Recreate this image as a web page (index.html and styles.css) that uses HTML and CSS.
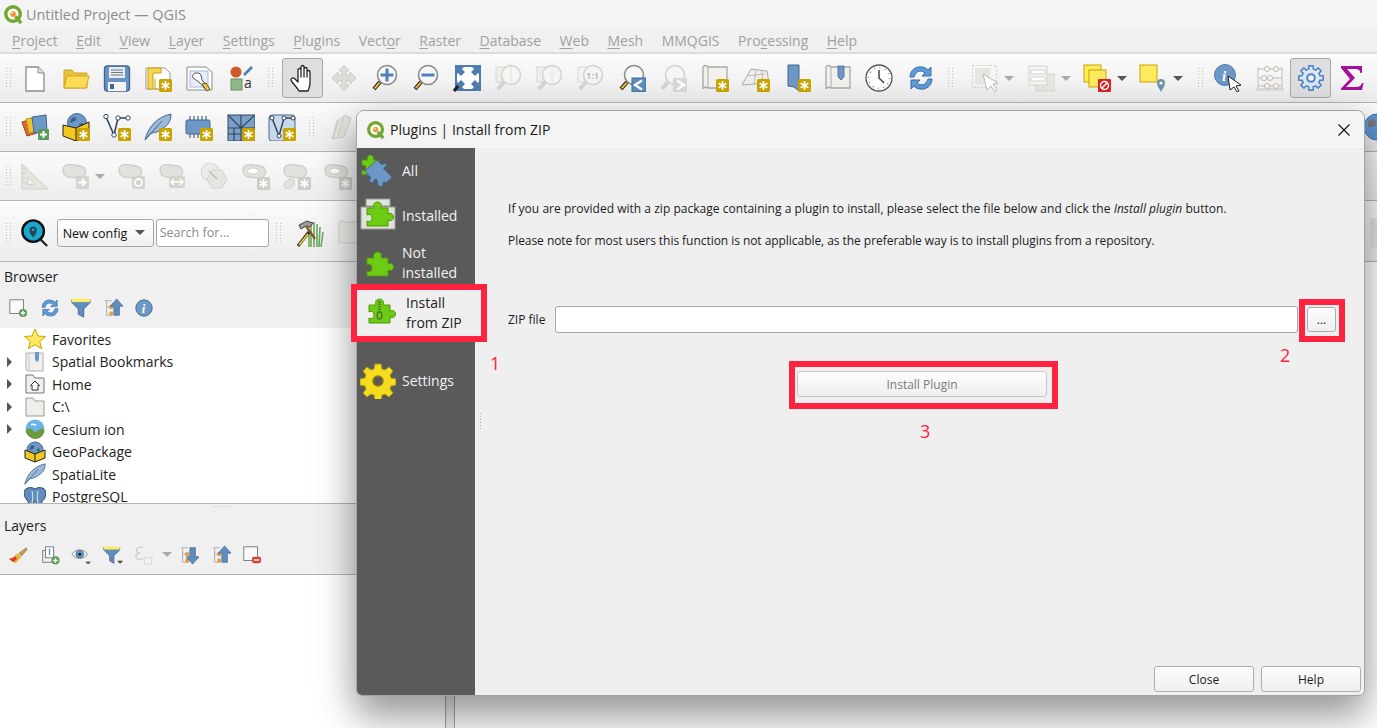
FILE: index.html
```html
<!DOCTYPE html>
<html lang="en">
<head>
  <meta charset="UTF-8">
  <title>Untitled Project — QGIS</title>
  <link rel="stylesheet" href="styles.css">
</head>
<body>

<svg class="sprite" xmlns="http://www.w3.org/2000/svg">
  <defs>
    <g id="star"><rect width="13" height="13" rx="1.5" fill="#c9a400"/><path d="M6.5 2v9M2.6 4.2l7.8 4.6M2.6 8.8l7.8-4.6" stroke="#fff" stroke-width="1.7"/></g>
    <g id="star-off"><rect width="13" height="13" rx="1.5" fill="#cfcdc6"/><path d="M6.5 2v9M2.6 4.2l7.8 4.6M2.6 8.8l7.8-4.6" stroke="#fff" stroke-width="1.7"/></g>
    <g id="lens"><path d="M9 18l-6 7" stroke="#222" stroke-width="4"/><path d="M8.6 18.6l-5 5.8" stroke="#f2c230" stroke-width="2"/><circle cx="16" cy="11" r="9.5" fill="#f7f7f7" stroke="#8b8b8b" stroke-width="1.6"/></g>
    <g id="lens-off"><path d="M9 18l-6 7" stroke="#d5d3cd" stroke-width="4"/><circle cx="16" cy="11" r="9.5" fill="#f5f5f3" stroke="#d2d2d2" stroke-width="1.6"/></g>
    <path id="blob" d="M1 8c0-5 5-6 10-5s10 0 12 4-1 9-6 9-7-1-10-1-6-2-6-7z" fill="#e2e1dd" stroke="#cfcecb" stroke-width="1.3"/>
    <path id="piece" d="M5 10h7c-1.5-4 1-6 3.5-6s5 2 3.5 6h7v6c3-1.5 5.5 0 5.5 3s-2.5 4.5-5.5 3v6H5v-5c3 1.5 5 0 5-3s-2-4.5-5-3z" fill="#6ccb12" stroke="#4f9a0a" stroke-width="1"/>
  </defs>

  <symbol id="qgis" viewBox="0 0 22 22"><circle cx="10.5" cy="10.5" r="7.6" fill="#fff" stroke="#72a82f" stroke-width="3.6"/><path d="M13 13l6 7" stroke="#72a82f" stroke-width="3.6"/><circle cx="10.5" cy="10.5" r="3" fill="#f0913a"/><circle cx="9.5" cy="9.5" r="1.2" fill="#ffe9a8"/></symbol>

  <symbol id="new" viewBox="0 0 28 28"><path d="M5 3h12l6 6v18H5z" fill="#fff" stroke="#8a8a8a" stroke-width="1.3"/><path d="M17 3v6h6" fill="#e4e4e4" stroke="#8a8a8a"/></symbol>
  <symbol id="open" viewBox="0 0 28 28"><path d="M2 24V6h8l2 3h13v15z" fill="#e8c23c" stroke="#cda828"/><path d="M2 24l3-12h22l-3 12z" fill="#ffdc55" stroke="#cda828"/></symbol>
  <symbol id="save" viewBox="0 0 28 28"><rect x="1.5" y="2" width="25" height="25" rx="3" fill="#6a93c4" stroke="#41678f" stroke-width="1.4"/><rect x="6" y="3" width="16" height="11" fill="#e9edf1"/><path d="M8 6h12M8 8.5h12M8 11h12" stroke="#6d7a88"/><rect x="5" y="18" width="18" height="9" fill="#f4f4f4"/><rect x="7" y="20" width="4" height="5" fill="#41678f"/></symbol>
  <symbol id="layout" viewBox="0 0 28 28"><path d="M2 4h19l5 5v16H2z" fill="#fff" stroke="#9a9a9a"/><path d="M4 4h13v5h-8v16H4z" fill="#f5d55a" stroke="#c9a400"/><path d="M11 15v10h3" fill="none" stroke="#c9a400"/><use href="#star" x="15" y="15"/></symbol>
  <symbol id="manager" viewBox="0 0 28 28"><path d="M2 3h19l6 5v18H2z" fill="#fff" stroke="#8a8a8a"/><rect x="5" y="7" width="18" height="16" fill="#e8eefc" stroke="#a8b8dd"/><path d="M11 9c-3 0-4 3-3 5l6 4 8 9 3-2-8-9-1-5c-1-2-3-2-5-2z" fill="#fff" stroke="#555"/><path d="M17 20l5 7 3-2-4-6z" fill="#f0c850" stroke="#6a5a20"/></symbol>
  <symbol id="style" viewBox="0 0 28 28"><circle cx="9" cy="8" r="5.5" fill="#d05a2a"/><path d="M17 11l8-8" stroke="#4f80b4" stroke-width="2.6"/><rect x="4" y="15" width="11" height="11" fill="#8fb98a" stroke="#6b8f68"/></symbol>
  <symbol id="hand" viewBox="0 0 28 28"><path d="M10 27c-2-4-7-8-8-11 0-2 2-3 4-1l3 3V6c0-2 3-2 3 0v7V3c0-2 3-2 3 0v10V5c0-2 3-2 3 0v8V8c0-2 3-2 3 0v11c0 3-1 5-2 8z" fill="#fff" stroke="#222" stroke-width="1.3" stroke-linejoin="round"/></symbol>
  <symbol id="pan" viewBox="0 0 28 28"><path d="M14 1l5 6h-3v4h4V8l6 6-6 6v-3h-4v4h3l-5 6-5-6h3v-4H8v3l-6-6 6-6v3h4V7H9z" fill="#dcdcd8" stroke="#cbcbc7"/></symbol>
  <symbol id="zoomin" viewBox="0 0 28 28"><use href="#lens"/><path d="M9.5 11h13M16 4.5v13" stroke="#4f80b8" stroke-width="3"/></symbol>
  <symbol id="zoomout" viewBox="0 0 28 28"><use href="#lens"/><path d="M9.5 11h13" stroke="#4f80b8" stroke-width="3"/></symbol>
  <symbol id="full" viewBox="0 0 28 28"><rect x="3" y="2" width="24" height="24" fill="#fff" stroke="#4f7cae" stroke-width="2"/><path d="M3 2h9l-3 3 3 3-4 4-3-3-2 3zM27 2h-9l3 3-3 3 4 4 3-3 2 3zM27 26h-9l3-3-3-3 4-4 3 3 2-3zM3 26h9l-3-3 3-3-4-4-3 3-2-3z" fill="#4f7cae"/><path d="M1 27l4-5" stroke="#222" stroke-width="3"/></symbol>
  <symbol id="zlayer" viewBox="0 0 28 28"><rect x="1" y="3" width="14" height="15" fill="#efeee9" stroke="#d8d7d2"/><use href="#lens-off"/><path d="M16 2v18" stroke="#e2e2e0"/></symbol>
  <symbol id="z11" viewBox="0 0 28 28"><rect x="1" y="3" width="14" height="15" fill="#f3f3f1" stroke="#d8d7d2"/><use href="#lens-off"/></symbol>
  <symbol id="zlast" viewBox="0 0 28 28"><use href="#lens"/><rect x="14" y="14" width="14" height="14" fill="#5f8dbf" stroke="#41678f"/><path d="M24 16.5l-7 4.5 7 4.5" fill="none" stroke="#fff" stroke-width="2.4"/></symbol>
  <symbol id="znext" viewBox="0 0 28 28"><use href="#lens-off"/><rect x="14" y="14" width="14" height="14" fill="#d7d7d5"/><path d="M18 16.5l7 4.5-7 4.5" fill="none" stroke="#fff" stroke-width="2.4"/></symbol>
  <symbol id="map" viewBox="0 0 28 28"><path d="M2 3c1-2 4-2 5 0h19v21H7c-2-1-4-1-5 1z" fill="#f1f0ec" stroke="#a9a9a5" stroke-width="1.3"/><path d="M7 3v21" stroke="#a9a9a5"/><use href="#star" x="15" y="15"/></symbol>
  <symbol id="map3d" viewBox="0 0 28 28"><path d="M9 5l16 2 2 12-27 2z" fill="#efeeea" stroke="#a9a9a5"/><path d="M5 12l18-2M14 6l-2 14M20 7l1 12" stroke="#bcbcb8"/><use href="#star" x="15" y="15"/></symbol>
  <symbol id="newbm" viewBox="0 0 28 28"><path d="M5 1h11v26l-5-4-6-1z" fill="#6d98c6" stroke="#41678f"/><use href="#star" x="15" y="15"/></symbol>
  <symbol id="showbm" viewBox="0 0 28 28"><path d="M2 3c1-2 4-2 5 0h19v21H7c-2-1-4-1-5 1z" fill="#f1f0ec" stroke="#a9a9a5" stroke-width="1.3"/><path d="M7 3v21" stroke="#a9a9a5"/><path d="M14 2h6v11l-3 3-3-3z" fill="#6d98c6" stroke="#41678f" stroke-width=".8"/></symbol>
  <symbol id="clock" viewBox="0 0 28 28"><circle cx="14" cy="14" r="13" fill="#fff" stroke="#565656" stroke-width="1.3"/><circle cx="14" cy="14" r="10.5" fill="none" stroke="#6d98c6" stroke-width="1.6" stroke-dasharray="1 4.5"/><path d="M14 6v8l5 5" fill="none" stroke="#444" stroke-width="1.5"/></symbol>
  <symbol id="refresh" viewBox="0 0 28 28"><path d="M3 13C3 6 9 2 15 3c3 0 5 2 6 3l3-3v9h-9l3-3c-3-3-9-3-11 4z" fill="#5f9bd8" stroke="#3a6ea6"/><path d="M25 15c0 7-6 11-12 10-3 0-5-2-6-3l-3 3v-9h9l-3 3c3 3 9 3 11-4z" fill="#5f9bd8" stroke="#3a6ea6"/></symbol>
  <symbol id="select" viewBox="0 0 28 28"><rect x="1.5" y="1.5" width="24" height="22" fill="none" stroke="#d2d1cc" stroke-dasharray="2 1.5"/><rect x="4" y="4" width="15" height="16" fill="#e6e5df"/><path d="M12 10l15 9-5 1 4 6-2 2-4-6-4 4z" fill="#fff" stroke="#bcbcb8"/></symbol>
  <symbol id="forms" viewBox="0 0 28 28"><rect x="9" y="10" width="19" height="17" fill="#e6e5df" stroke="#d6d5cf"/><rect x="2" y="2" width="18" height="19" fill="#f5f5f3" stroke="#d2d1cc"/><path d="M4 6h14v4H4zM4 13h14v4H4z" fill="#fff" stroke="#d2d1cc"/></symbol>
  <symbol id="desel" viewBox="0 0 28 28"><rect x="1" y="1" width="17" height="17" fill="#ffe95c" stroke="#c9a400"/><rect x="6" y="6" width="17" height="17" fill="#ffe95c" stroke="#c9a400"/><rect x="15" y="15" width="13" height="13" rx="1" fill="#d8232a"/><circle cx="21.5" cy="21.5" r="4" fill="none" stroke="#fff" stroke-width="1.5"/><path d="M18.5 24.5l6-6" stroke="#fff" stroke-width="1.5"/></symbol>
  <symbol id="selloc" viewBox="0 0 28 28"><rect x="1" y="1" width="17" height="17" fill="#ffe95c" stroke="#c9a400"/><path d="M22 28c-2-4-4-6-4-9a4 4 0 0 1 8 0c0 3-2 5-4 9z" fill="#6f94ae"/><circle cx="22" cy="19" r="1.6" fill="#fff"/></symbol>
  <symbol id="info" viewBox="0 0 28 28"><circle cx="11" cy="11" r="10.5" fill="#6d98c6" stroke="#4f7cae"/></symbol>
  <symbol id="cursor" viewBox="0 0 28 28"><path d="M14 12l13 9-5 1 3 5-2 1-3-5-4 3z" fill="#fff" stroke="#222"/></symbol>
  <symbol id="abacus" viewBox="0 0 28 28"><path d="M2 3v22M26 3v22M2 5h24M2 14h24M2 22h24" stroke="#cfcdc7" stroke-width="1.3"/><rect y="24" width="28" height="3" fill="#dcdbd6"/><circle cx="11" cy="5" r="2.6" fill="#f4f4f2" stroke="#c5bdb5"/><circle cx="20" cy="5" r="2.6" fill="#f4f4f2" stroke="#c5bdb5"/><circle cx="8" cy="14" r="2.6" fill="#f4f4f2" stroke="#c5bdb5"/><circle cx="14" cy="14" r="2.6" fill="#f4f4f2" stroke="#c5bdb5"/><circle cx="11" cy="22" r="2.6" fill="#f4f4f2" stroke="#c5bdb5"/><circle cx="20" cy="22" r="2.6" fill="#f4f4f2" stroke="#c5bdb5"/></symbol>
  <symbol id="gear" viewBox="0 0 28 28">
    <g fill="#4f86c6"><rect x="11" y="1" width="6" height="26" rx="1"/><rect x="11" y="1" width="6" height="26" rx="1" transform="rotate(45 14 14)"/><rect x="11" y="1" width="6" height="26" rx="1" transform="rotate(90 14 14)"/><rect x="11" y="1" width="6" height="26" rx="1" transform="rotate(135 14 14)"/><circle cx="14" cy="14" r="10"/></g>
    <g fill="#dbe6f3"><rect x="12.5" y="2.6" width="3" height="22.8"/><rect x="12.5" y="2.6" width="3" height="22.8" transform="rotate(45 14 14)"/><rect x="12.5" y="2.6" width="3" height="22.8" transform="rotate(90 14 14)"/><rect x="12.5" y="2.6" width="3" height="22.8" transform="rotate(135 14 14)"/><circle cx="14" cy="14" r="8.4"/></g>
    <circle cx="14" cy="14" r="3.8" fill="#f5f5f5" stroke="#4f86c6" stroke-width="2"/>
  </symbol>
  <symbol id="sigma" viewBox="0 0 28 28"><path d="M3 2h21v7h-1.5c-.5-3-2-4-5-4H9l8 9-9 9h10c3 0 5-1 6-4h1.5L24 26H3v-1.5L12 15 3 4z" fill="#a4109c"/></symbol>

  <symbol id="addlayer" viewBox="0 0 28 28"><path d="M1 9l10-3 5 14-10 3z" fill="#d96a2c" stroke="#a0481a"/><path d="M5 6l11-2 3 14-11 2z" fill="#f2c230" stroke="#b9921a"/><path d="M11 4l14-2 1 16-13 2z" fill="#6d98c6" stroke="#41678f"/><rect x="17" y="16" width="11" height="11" rx="1" fill="#5c9a5c"/><path d="M22.5 18v7M19 21.5h7" stroke="#fff" stroke-width="2"/></symbol>
  <symbol id="gpkg" viewBox="0 0 28 28"><circle cx="15" cy="10" r="9.5" fill="#6d98c6" stroke="#41678f"/><path d="M10 5c3-2 5 0 4 2s-4 1-5 3-1-3 1-5zM17 11c2-2 5-1 5 1s-3 3-4 2z" fill="#3d5f85"/><path d="M1 12l13 3 13-6v13l-13 6-13-5z" fill="#f0c820" stroke="#222"/><path d="M14 15v13" stroke="#222"/><use href="#star" x="15" y="15"/></symbol>
  <symbol id="vector" viewBox="0 0 28 28"><path d="M3 4l8 18 4-17h10" fill="none" stroke="#33475e" stroke-width="1.6"/><circle cx="3" cy="3.5" r="2.2" fill="#fff" stroke="#33475e"/><circle cx="11" cy="22" r="2.2" fill="#fff" stroke="#33475e"/><circle cx="15" cy="5" r="2.2" fill="#fff" stroke="#33475e"/><circle cx="25" cy="5" r="2.2" fill="#fff" stroke="#33475e"/><use href="#star" x="15" y="15"/></symbol>
  <symbol id="feather" viewBox="0 0 28 28"><path d="M1 27C4 14 13 4 27 1c0 8-4 12-8 14-3 3-7 5-12 5z" fill="#9cb8d8" stroke="#41678f"/><path d="M1 27L18 8" stroke="#41678f"/></symbol>
  <symbol id="featherstar" viewBox="0 0 28 28"><use href="#feather"/><use href="#star" x="15" y="15"/></symbol>
  <symbol id="chip" viewBox="0 0 28 28"><path d="M5 3v22M9 3v22M13 3v22M17 3v22M21 3v22" stroke="#33475e"/><rect x="1" y="7" width="24" height="14" rx="1.5" fill="#6d98c6" stroke="#41678f"/><use href="#star" x="15" y="15"/></symbol>
  <symbol id="mesh" viewBox="0 0 28 28"><rect x="1" y="2" width="27" height="26" fill="#7ba0c8" stroke="#33475e"/><path d="M1 15h27M14 2v26M1 2l13 13M14 15L28 2M1 21h13M7 15v13" stroke="#33475e" stroke-width="1.2"/><use href="#star" x="15" y="15"/></symbol>
  <symbol id="virtual" viewBox="0 0 28 28"><rect x="1" y="2" width="26" height="26" rx="3" fill="#c9d9ea" stroke="#41678f"/><path d="M4 5l7 18 5-18h9" fill="none" stroke="#33475e" stroke-width="1.5"/><circle cx="4" cy="5" r="2" fill="#fff" stroke="#33475e"/><circle cx="11" cy="23" r="2" fill="#fff" stroke="#33475e"/><circle cx="16" cy="5" r="2" fill="#fff" stroke="#33475e"/><circle cx="25" cy="5" r="2" fill="#fff" stroke="#33475e"/><use href="#star" x="15" y="15"/></symbol>
  <symbol id="pencils" viewBox="0 0 28 28"><path d="M2 26l5-18 8-6 6 3-7 19z" fill="#e6e5e0" stroke="#d0cfca"/><path d="M8 8l-5 18M14 4l-6 20" stroke="#d0cfca"/></symbol>
  <symbol id="globe" viewBox="0 0 28 28"><circle cx="14" cy="14" r="13" fill="#5e93cf" stroke="#3f6f9f"/><path d="M5 8c5-3 8-2 8 2s-6 6-8 3zM16 14c4-2 7 0 6 4s-5 5-6 2z" fill="#777"/></symbol>
  <symbol id="measure" viewBox="0 0 30 30"><path d="M1 2l28 27H1z" fill="#e5e4df" stroke="#cfcec9"/><path d="M7 16l8 8H7z" fill="#f2f2f0" stroke="#cfcec9"/><path d="M1 7h4M1 12h4M1 17h4M1 22h4" stroke="#cfcec9"/></symbol>
  <symbol id="blobmove" viewBox="0 0 28 28"><use href="#blob"/><rect x="14" y="14" width="13" height="13" rx="2" fill="#d4d3ce"/><path d="M16 20.5h6M20 17l3.5 3.5L20 24" fill="none" stroke="#fff" stroke-width="2"/></symbol>
  <symbol id="blobrot" viewBox="0 0 28 28"><use href="#blob"/><rect x="14" y="14" width="13" height="13" rx="2" fill="#d4d3ce"/><circle cx="20.5" cy="20.5" r="3.5" fill="none" stroke="#fff" stroke-width="1.8"/></symbol>
  <symbol id="blobflip" viewBox="0 0 28 28"><use href="#blob"/><rect x="10" y="14" width="16" height="12" rx="2" fill="#d4d3ce"/><path d="M12 20h12M15 17l-3 3 3 3M21 17l3 3-3 3" fill="none" stroke="#fff" stroke-width="1.6"/></symbol>
  <symbol id="hexa" viewBox="0 0 28 28"><circle cx="10" cy="10" r="9" fill="#ecebe7" stroke="#d4d3ce"/><path d="M12 8h10l5 9-5 9H12l-5-9z" fill="#e6e5e0" stroke="#d4d3ce"/><path d="M9 9l8 8" stroke="#bcbbb6" stroke-width="1.4"/></symbol>
  <symbol id="blobring" viewBox="0 0 28 28"><use href="#blob"/><ellipse cx="11" cy="9" rx="5.5" ry="3" fill="#fff" stroke="#cfcecb"/><use href="#star-off" x="15" y="15"/></symbol>
  <symbol id="blobtwo" viewBox="0 0 28 28"><use href="#blob"/><path d="M1 24c0-4 4-7 8-7s3 6 0 8-8 2-8-1z" fill="#e2e1dd" stroke="#cfcecb"/><use href="#star-off" x="15" y="15"/></symbol>
  <symbol id="search" viewBox="0 0 30 30"><path d="M19 20l9 9" stroke="#222" stroke-width="2.4"/><circle cx="13" cy="13" r="11.5" fill="#1ba7cf" stroke="#101010" stroke-width="2.6"/><path d="M13 20c-2-3-4-5-4-8a4 4 0 0 1 8 0c0 3-2 5-4 8z" fill="#244a5a"/><circle cx="13" cy="11.5" r="1.4" fill="#1ba7cf"/></symbol>
  <symbol id="tools" viewBox="0 0 28 28"><path d="M15 6v22M18 3v25M21 5v23M24 8l-1 20M27 13l-2 15M13 12v16" stroke="#6aa860" stroke-width="1.6"/><path d="M3 6l8-4 6 2-3 4-4-1-5 3z" fill="#9a9a9a" stroke="#444"/><path d="M10 7l9 13" stroke="#8a5a2a" stroke-width="2.4"/><path d="M2 27l11-14" stroke="#333" stroke-width="3.2"/><path d="M3 26l9-11" stroke="#f0c830" stroke-width="1.8"/></symbol>
  <symbol id="scroll-off" viewBox="0 0 28 28"><path d="M2 3c1-2 4-2 5 0h19v21H7c-2-1-4-1-5 1z" fill="#eeeeea" stroke="#d4d3ce"/></symbol>

  <symbol id="addnew" viewBox="0 0 22 22"><rect x="2" y="2" width="15" height="15" fill="#fafafa" stroke="#777"/><circle cx="16.5" cy="16.5" r="4.5" fill="#5c9a5c"/><path d="M16.5 14v5M14 16.5h5" stroke="#fff" stroke-width="1.5"/></symbol>
  <symbol id="filter" viewBox="0 0 22 22"><path d="M1 2h20v3l-7 7v9l-6-3v-6L1 5z" fill="#5f8dbf" stroke="#41678f"/><rect x="1" y="1" width="20" height="3.5" fill="#ffe95c"/></symbol>
  <symbol id="collapse" viewBox="0 0 22 22"><path d="M2 3h8M4 3v16h6M4 10h6" fill="none" stroke="#aaa"/><rect x="7" y="8" width="4" height="4" fill="#e89a3c"/><rect x="7" y="15" width="4" height="4" fill="#e89a3c"/><path d="M15 1l7 8h-4v10h-6V9H8z" fill="#5f8dbf" stroke="#41678f" stroke-width=".8"/></symbol>
  <symbol id="expand" viewBox="0 0 22 22"><path d="M2 3h8M4 3v16h6M4 10h6" fill="none" stroke="#aaa"/><rect x="7" y="8" width="4" height="4" fill="#e89a3c"/><rect x="7" y="15" width="4" height="4" fill="#e89a3c"/><path d="M15 21l7-8h-4V3h-6v10H8z" fill="#5f8dbf" stroke="#41678f" stroke-width=".8"/></symbol>
  <symbol id="disc" viewBox="0 0 22 22"><circle cx="11" cy="11" r="9" fill="#6d98c6" stroke="#41678f"/></symbol>
  <symbol id="brush" viewBox="0 0 22 22"><path d="M12 9l8-6 1 2-6 7z" fill="#c9985a" stroke="#8a6a3a" stroke-width=".6"/><path d="M1 15c4 0 7-4 10-6l4 4c-3 2-4 6-7 7z" fill="#e8b83c"/><path d="M1 15c3 0 5-1 7-3l2 3-4 4z" fill="#d8402a"/></symbol>
  <symbol id="addgroup" viewBox="0 0 22 22"><rect x="3" y="6" width="12" height="13" fill="#eee" stroke="#777"/><rect x="6" y="2" width="9" height="12" fill="#fff" stroke="#777"/><path d="M10.5 4v7" stroke="#5f8dbf" stroke-width="1.5"/><circle cx="17" cy="17" r="4.5" fill="#5c9a5c"/><path d="M17 14.5v5M14.5 17h5" stroke="#fff" stroke-width="1.5"/></symbol>
  <symbol id="eye" viewBox="0 0 24 22"><path d="M1 10c5-7 14-7 19 0-5 7-14 7-19 0z" fill="#e9eef4" stroke="#888"/><circle cx="10.5" cy="10" r="4.5" fill="#6d98c6" stroke="#41678f"/><circle cx="10.5" cy="10" r="1.8" fill="#222"/><path d="M17 19h7l-3.5 3z" fill="#444"/></symbol>
  <symbol id="filterdrop" viewBox="0 0 24 22"><path d="M1 2h19v3l-7 7v9l-5-3v-6L1 5z" fill="#5f8dbf" stroke="#41678f"/><rect x="1" y="1" width="19" height="3.5" fill="#ffe95c"/><path d="M17 18h7l-3.5 3.5z" fill="#444"/></symbol>
  <symbol id="expr" viewBox="0 0 22 22"><path d="M10 3c-3-1-7 0-7 3s3 3 4 3c-2 0-5 1-5 4s5 4 8 2" fill="none" stroke="#ccc" stroke-width="1.5"/><path d="M11 14h9l-1 7h-7z" fill="#f2f2f0" stroke="#d4d4d0"/></symbol>
  <symbol id="remove" viewBox="0 0 22 22"><rect x="2" y="2" width="15" height="15" fill="#fafafa" stroke="#777"/><rect x="11" y="13" width="10" height="7" rx="2" fill="#d8433a"/><path d="M13 16.5h6" stroke="#fff" stroke-width="1.5"/></symbol>

  <symbol id="star5" viewBox="0 0 22 22"><path d="M11 1l3 7 7.5.5-5.8 4.8 1.9 7.4L11 16.6l-6.600 4.100 1.900-7.400L.5 8.500 8 8z" fill="#ffe95c" stroke="#c9a400"/></symbol>
  <symbol id="bm" viewBox="0 0 22 22"><path d="M2 2h17v18H5c-1 0-3 0-3-2z" fill="#f1f0ec" stroke="#b0b0ac"/><path d="M5 2v18" stroke="#c8c8c4"/><path d="M11 1h4v8l-2 2-2-2z" fill="#6d98c6"/></symbol>
  <symbol id="home" viewBox="0 0 22 22"><path d="M2 20V2h7l2 3h9v15z" fill="#f1f0ec" stroke="#777"/><path d="M6 13l5-5 5 5M8 12v5h6v-5" fill="#fff" stroke="#333"/></symbol>
  <symbol id="folder" viewBox="0 0 22 22"><path d="M2 20V2h7l2 3h9v15z" fill="#efeeea" stroke="#999"/></symbol>
  <symbol id="cesium" viewBox="0 0 22 22"><circle cx="11" cy="11" r="9.5" fill="#6bb3e8"/><path d="M1.5 13c3-3 5-3 7-1s3 3 6 0 5-1 6 1c-1 5-5 8-9 8s-8-3-10-8z" fill="#6d9a3c"/><path d="M7 7c2-2 3 0 5 0" stroke="#fff" stroke-width="1.6" fill="none"/></symbol>
  <symbol id="geopkg" viewBox="0 0 22 22"><circle cx="11" cy="9" r="8" fill="#6d98c6" stroke="#41678f"/><path d="M7 5c2-2 4 0 3 2s-3 1-4 2 0-3 1-4zM13 8c2-1 3 0 3 1s-2 2-3 1z" fill="#3d5f85"/><path d="M1 9l10 4 10-4v8l-10 4-10-4z" fill="#f0c820" stroke="#222"/><path d="M11 13v8" stroke="#222"/></symbol>
  <symbol id="pg" viewBox="0 0 22 22"><path d="M11 3c3-2 8-2 10 1s0 10-3 11l-1 7h-3l-1-6h-4l-1 6H5l-1-7C1 13-1 7 1 4s7-3 10-1z" fill="#5f8dbf" stroke="#33475e"/><path d="M8 5c1 4 1 8 0 12M14 5c-1 4-1 8 0 12" fill="none" stroke="#dce6f0"/></symbol>

  <symbol id="p-all" viewBox="0 0 36 36"><g transform="translate(-2 -1) scale(.8)"><use href="#piece"/></g><path d="M5 18l12-11 5 5c3-3 5-1 4 1s-3 2-2 3l8 8-6 6c-2-2-3-1-3 1s-3 4-5 1 1-4-1-5l-2-1-2 3c-3 2-5-2-2-4z" fill="#6d98c6" stroke="#41678f"/></symbol>
  <symbol id="p-ins" viewBox="0 0 36 36"><rect x="6" y="1" width="24" height="7" fill="#dfe3da" stroke="#999"/><rect x="1" y="9" width="34" height="22" fill="#dfe3da" stroke="#999"/><use href="#piece" x="2"/></symbol>
  <symbol id="p-not" viewBox="0 0 36 36"><use href="#piece" x="2" y="3"/></symbol>
  <symbol id="p-zip" viewBox="0 0 36 36"><use href="#piece"/><path d="M15.5 6v12" stroke="#55713a" stroke-width="2.4" stroke-dasharray="1.5 1"/><rect x="13.2" y="17" width="4.6" height="7" rx="2.3" fill="none" stroke="#55713a" stroke-width="1.4"/></symbol>
  <symbol id="p-set" viewBox="0 0 36 36"><path d="M15 1h6l1 5 3 1 4-3 4 4-3 4 1 3 5 1v6l-5 1-1 3 3 4-4 4-4-3-3 1-1 5h-6l-1-5-3-1-4 3-4-4 3-4-1-3-5-1v-6l5-1 1-3-3-4 4-4 4 3 3-1z" fill="#f5dd1e" stroke="#b59a10"/><circle cx="18" cy="18" r="5" fill="#5a5a5a" stroke="#8f7a10" stroke-width="1.5"/></symbol>
</svg>

<div class="app">
  <div class="titlebar">
    <svg class="logo"><use href="#qgis"/></svg>
    <span>Untitled Project — QGIS</span>
  </div>

  <div class="menubar">
    <span><u>P</u>roject</span>
    <span><u>E</u>dit</span>
    <span><u>V</u>iew</span>
    <span><u>L</u>ayer</span>
    <span><u>S</u>ettings</span>
    <span><u>P</u>lugins</span>
    <span>Vect<u>o</u>r</span>
    <span><u>R</u>aster</span>
    <span><u>D</u>atabase</span>
    <span><u>W</u>eb</span>
    <span><u>M</u>esh</span>
    <span>MMQGIS</span>
    <span>Pro<u>c</u>essing</span>
    <span><u>H</u>elp</span>
  </div>

  <div class="toolbar">
    <i class="grip"></i>
    <span class="tool"><svg class="ic"><use href="#new"/></svg></span>
    <span class="tool"><svg class="ic"><use href="#open"/></svg></span>
    <span class="tool"><svg class="ic"><use href="#save"/></svg></span>
    <span class="tool"><svg class="ic"><use href="#layout"/></svg></span>
    <span class="tool"><svg class="ic"><use href="#manager"/></svg></span>
    <span class="tool"><svg class="ic" viewBox="0 0 28 28"><use href="#style" width="28" height="28"/><text x="17" y="24" class="svg-a">a</text></svg></span>
    <i class="grip"></i>
    <span class="tool on"><svg class="ic"><use href="#hand"/></svg></span>
    <span class="tool"><svg class="ic"><use href="#pan"/></svg></span>
    <span class="tool"><svg class="ic"><use href="#zoomin"/></svg></span>
    <span class="tool"><svg class="ic"><use href="#zoomout"/></svg></span>
    <span class="tool"><svg class="ic"><use href="#full"/></svg></span>
    <span class="tool"><svg class="ic"><use href="#zlayer"/></svg></span>
    <span class="tool"><svg class="ic"><use href="#zlayer"/></svg></span>
    <span class="tool"><svg class="ic" viewBox="0 0 28 28"><use href="#z11" width="28" height="28"/><text x="9" y="15" class="svg-one">1:1</text></svg></span>
    <span class="tool"><svg class="ic"><use href="#zlast"/></svg></span>
    <span class="tool"><svg class="ic"><use href="#znext"/></svg></span>
    <span class="tool"><svg class="ic"><use href="#map"/></svg></span>
    <span class="tool"><svg class="ic"><use href="#map3d"/></svg></span>
    <span class="tool"><svg class="ic"><use href="#newbm"/></svg></span>
    <span class="tool"><svg class="ic"><use href="#showbm"/></svg></span>
    <span class="tool"><svg class="ic"><use href="#clock"/></svg></span>
    <span class="tool"><svg class="ic"><use href="#refresh"/></svg></span>
    <i class="grip grip-wide"></i>
    <span class="tool"><svg class="ic"><use href="#select"/></svg></span><i class="drop off"></i>
    <span class="tool"><svg class="ic"><use href="#forms"/></svg></span><i class="drop off"></i>
    <span class="tool"><svg class="ic"><use href="#desel"/></svg></span><i class="drop"></i>
    <span class="tool"><svg class="ic"><use href="#selloc"/></svg></span><i class="drop"></i>
    <i class="grip"></i>
    <span class="tool"><svg class="ic" viewBox="0 0 28 28"><use href="#info" width="28" height="28"/><text x="8" y="17" class="svg-i">i</text><use href="#cursor" width="28" height="28"/></svg></span>
    <span class="tool"><svg class="ic"><use href="#abacus"/></svg></span>
    <span class="tool on"><svg class="ic"><use href="#gear"/></svg></span>
    <span class="tool"><svg class="ic"><use href="#sigma"/></svg></span>
  </div>

  <div class="toolbar">
    <i class="grip"></i>
    <span class="tool"><svg class="ic"><use href="#addlayer"/></svg></span>
    <span class="tool"><svg class="ic"><use href="#gpkg"/></svg></span>
    <span class="tool"><svg class="ic"><use href="#vector"/></svg></span>
    <span class="tool"><svg class="ic"><use href="#featherstar"/></svg></span>
    <span class="tool"><svg class="ic"><use href="#chip"/></svg></span>
    <span class="tool"><svg class="ic"><use href="#mesh"/></svg></span>
    <span class="tool"><svg class="ic"><use href="#virtual"/></svg></span>
    <i class="grip"></i>
    <span class="tool"><svg class="ic"><use href="#pencils"/></svg></span>
    <svg class="ic edge"><use href="#globe"/></svg>
  </div>

  <div class="toolbar">
    <i class="grip"></i>
    <span class="tool"><svg class="ic"><use href="#measure"/></svg></span>
    <span class="tool"><svg class="ic"><use href="#blobmove"/></svg></span><i class="drop off"></i>
    <span class="tool"><svg class="ic"><use href="#blobrot"/></svg></span>
    <span class="tool"><svg class="ic"><use href="#blobflip"/></svg></span>
    <span class="tool"><svg class="ic"><use href="#hexa"/></svg></span>
    <span class="tool"><svg class="ic"><use href="#blobring"/></svg></span>
    <span class="tool"><svg class="ic"><use href="#blobtwo"/></svg></span>
    <span class="tool"><svg class="ic"><use href="#blobring"/></svg></span>
  </div>

  <div class="toolbar toolbar-tall">
    <i class="grip"></i>
    <span class="tool"><svg class="ic"><use href="#search"/></svg></span>
    <span class="combo">New config</span>
    <span class="searchbox">Search for...</span>
    <i class="grip"></i>
    <span class="tool"><svg class="ic"><use href="#tools"/></svg></span>
    <span class="tool"><svg class="ic"><use href="#scroll-off"/></svg></span>
    <span class="edge-box"></span>
  </div>

  <div class="workspace">
    <div class="side">
      <div class="panel-title">Browser</div>
      <div class="panel-tools">
        <span class="ptool"><svg class="ic-sm"><use href="#addnew"/></svg></span>
        <span class="ptool"><svg class="ic-sm"><use href="#refresh"/></svg></span>
        <span class="ptool"><svg class="ic-sm"><use href="#filter"/></svg></span>
        <span class="ptool"><svg class="ic-sm"><use href="#collapse"/></svg></span>
        <span class="ptool"><svg class="ic-sm" viewBox="0 0 22 22"><use href="#disc" width="22" height="22"/><text x="8.5" y="16" class="svg-i-sm">i</text></svg></span>
      </div>
      <ul class="tree">
        <li><i class="twisty none"></i><svg class="ic-tree"><use href="#star5"/></svg>Favorites</li>
        <li><i class="twisty"></i><svg class="ic-tree"><use href="#bm"/></svg>Spatial Bookmarks</li>
        <li><i class="twisty"></i><svg class="ic-tree"><use href="#home"/></svg>Home</li>
        <li><i class="twisty"></i><svg class="ic-tree"><use href="#folder"/></svg>C:\</li>
        <li><i class="twisty"></i><svg class="ic-tree"><use href="#cesium"/></svg>Cesium ion</li>
        <li><i class="twisty none"></i><svg class="ic-tree"><use href="#geopkg"/></svg>GeoPackage</li>
        <li><i class="twisty none"></i><svg class="ic-tree"><use href="#feather"/></svg>SpatiaLite</li>
        <li><i class="twisty none"></i><svg class="ic-tree"><use href="#pg"/></svg>PostgreSQL</li>
      </ul>
      <div class="panel-split"><i></i></div>
      <div class="panel-title panel-title-layers">Layers</div>
      <div class="panel-tools panel-tools-layers">
        <span class="ptool"><svg class="ic-sm"><use href="#brush"/></svg></span>
        <span class="ptool"><svg class="ic-sm"><use href="#addgroup"/></svg></span>
        <span class="ptool"><svg class="ic-sm"><use href="#eye"/></svg></span>
        <span class="ptool"><svg class="ic-sm"><use href="#filterdrop"/></svg></span>
        <span class="ptool"><svg class="ic-sm"><use href="#expr"/></svg></span><i class="drop off drop-sm"></i>
        <span class="ptool"><svg class="ic-sm"><use href="#expand"/></svg></span>
        <span class="ptool"><svg class="ic-sm"><use href="#collapse"/></svg></span>
        <span class="ptool"><svg class="ic-sm"><use href="#remove"/></svg></span>
      </div>
      <div class="layer-list"></div>
    </div>
    <div class="splitter"></div>
    <div class="canvas"></div>
  </div>
</div>

<div class="dialog">
  <div class="dialog-head">
    <svg class="dialog-logo"><use href="#qgis"/></svg>
    <span class="dialog-title">Plugins | Install from ZIP</span>
    <svg class="dialog-close" viewBox="0 0 12 12"><path d="M.5.5l11 11M11.5.5l-11 11" stroke="#111" stroke-width="1.1"/></svg>
  </div>
  <div class="dialog-body">
    <nav class="nav">
      <div class="nav-item h-all"><svg class="ic-nav"><use href="#p-all"/></svg><span>All</span></div>
      <div class="nav-item h-ins"><svg class="ic-nav"><use href="#p-ins"/></svg><span>Installed</span></div>
      <div class="nav-item h-not"><svg class="ic-nav"><use href="#p-not"/></svg><span>Not<br>installed</span></div>
      <div class="nav-item nav-current"><svg class="ic-nav"><use href="#p-zip"/></svg><span>Install<br>from ZIP</span></div>
      <div class="nav-item h-set"><svg class="ic-nav"><use href="#p-set"/></svg><span>Settings</span></div>
    </nav>
    <div class="content">
      <i class="vgrip"></i>
      <div class="pane">
        <p>If you are provided with a zip package containing a plugin to install, please select the file below and click the <em>Install plugin</em> button.</p>
        <p>Please note for most users this function is not applicable, as the preferable way is to install plugins from a repository.</p>
        <div class="zip-row">
          <label class="zip-label">ZIP file</label>
          <span class="zip-input"></span>
          <button class="btn btn-dots">...</button>
        </div>
        <button class="btn btn-install" disabled>Install Plugin</button>
      </div>
      <div class="footer">
        <button class="btn btn-foot">Close</button>
        <button class="btn btn-foot">Help</button>
      </div>
    </div>
  </div>
</div>

<!-- red annotations drawn on top of the screenshot -->
<div class="mark mark-1"></div>
<div class="mark mark-2"></div>
<div class="mark mark-3"></div>
<span class="num num-1">1</span>
<span class="num num-2">2</span>
<span class="num num-3">3</span>

</body>
</html>
```

FILE: styles.css
```css
* {
  box-sizing: border-box;
}

html, body {
  margin: 0;
  height: 100%;
  overflow: hidden;
}

body {
  position: relative;
  font-family: "Open Sans", "Noto Sans", sans-serif;
  font-size: 14px;
  color: #1c1c1c;
  background-color: #f0f0f0;
}

.sprite {
  position: absolute;
  width: 0;
  height: 0;
}

.svg-a {
  font: 14px "Open Sans", sans-serif;
  fill: #333;
}

.svg-i {
  font: italic bold 15px "Liberation Serif", serif;
  fill: #fff;
}

.svg-i-sm {
  font: italic bold 14px "Liberation Serif", serif;
  fill: #fff;
}

.svg-one {
  font: bold 9px "Open Sans", sans-serif;
  fill: #bdbdbd;
}

.app {
  display: flex;
  flex-direction: column;
  height: 728px;
}

/* window title */
.titlebar {
  display: flex;
  align-items: center;
  height: 28px;
  padding-left: 3px;
  gap: 2px;
  background-color: #f4f4f4;
  color: #8c8c8c;
  font-size: 14.4px;
}

.logo {
  width: 21px;
  height: 21px;
}

.menubar {
  display: flex;
  align-items: center;
  gap: 18.5px;
  height: 26px;
  padding-left: 12px;
  background-color: #f0f0f0;
  border-bottom: 2px solid #dcdcdc;
  color: #a0a0a0;
  font-size: 14px;
}

.menubar u {
  text-underline-offset: 2px;
}

/* toolbars */
.toolbar {
  display: flex;
  align-items: center;
  flex: none;
  height: 49px;
  padding-left: 6px;
  overflow: hidden;
  background: linear-gradient(#fbfbfb, #ececec);
  border-bottom: 1px solid #b4b4b4;
}

.toolbar-tall {
  height: 61px;
  padding-top: 3px;
}

.grip {
  flex: none;
  width: 8px;
  height: 20px;
  background-image:
    repeating-linear-gradient(#bcbcbc 0 1px, transparent 1px 3px),
    repeating-linear-gradient(#bcbcbc 0 1px, transparent 1px 3px);
  background-size: 1px 100%;
  background-position: 0 0, 4px 0;
  background-repeat: no-repeat;
}

.tool + .grip,
.searchbox + .grip {
  margin-left: 7px;
  margin-right: 6px;
}

.tool + .grip-wide {
  margin-right: 8px;
}

.drop + .grip {
  margin-left: 9px;
  margin-right: 2px;
}

.tool {
  display: flex;
  align-items: center;
  justify-content: center;
  flex: none;
  width: 41.2px;
  height: 40px;
  border: 1px solid transparent;
  border-radius: 3px;
}

.tool.on {
  background-color: #dedede;
  border-color: #a8a8a8;
}

.ic {
  width: 28px;
  height: 28px;
}

.drop {
  flex: none;
  width: 0;
  height: 0;
  margin: 0 6px 0 -1px;
  border-style: solid;
  border-width: 5px 5px 0;
  border-color: #555 transparent transparent;
}

.drop.off {
  border-top-color: #aaa;
}

.edge {
  flex: none;
  margin-left: auto;
  margin-right: -14px;
}

.edge-box {
  flex: none;
  width: 30px;
  height: 30px;
  margin-left: auto;
  margin-right: -23px;
  background-color: #e4e4e2;
}

.combo {
  position: relative;
  flex: none;
  width: 97px;
  height: 28px;
  margin-left: 1.5px;
  padding-left: 5px;
  line-height: 27px;
  font-size: 12.5px;
  color: #111;
  background: linear-gradient(#fff, #f0f0f0);
  border: 1px solid #a8a8a8;
  border-radius: 3px;
}

.combo::after {
  content: "";
  position: absolute;
  right: 8px;
  top: 10px;
  border-style: solid;
  border-width: 5px 5px 0;
  border-color: #555 transparent transparent;
}

.searchbox {
  flex: none;
  width: 113px;
  height: 28px;
  margin-left: 2px;
  padding-left: 3px;
  line-height: 26px;
  font-size: 12.5px;
  color: #8a8a8a;
  background-color: #fff;
  border: 1px solid #a8a8a8;
  border-radius: 3px;
}

/* browser and layers panels */
.workspace {
  display: flex;
  flex: 1;
  min-height: 0;
}

.side {
  display: flex;
  flex-direction: column;
  flex: none;
  width: 446px;
  border-right: 1px solid #a6a6a6;
}

.panel-title {
  height: 31px;
  padding: 6px 0 0 4px;
  font-size: 14px;
  line-height: 18px;
  color: #222;
}

.panel-title-layers {
  height: 36px;
  padding-top: 13px;
}

.panel-tools {
  display: flex;
  align-items: center;
  height: 35px;
  padding: 0 0 5px 2.5px;
}

.panel-tools-layers {
  border-bottom: 1px solid #b4b4b4;
}

.ptool {
  display: flex;
  align-items: center;
  justify-content: center;
  flex: none;
  width: 31.5px;
}

.ic-sm {
  width: 20px;
  height: 20px;
}

.drop-sm {
  margin: 0 2px 0 1.5px;
}

.tree {
  flex: none;
  height: 176px;
  margin: 0;
  padding: 0;
  overflow: hidden;
  list-style: none;
  background-color: #fff;
  border-bottom: 1px solid #b4b4b4;
}

.tree li {
  display: flex;
  align-items: center;
  height: 22.5px;
  font-size: 14px;
  color: #222;
}

.twisty {
  flex: none;
  width: 0;
  height: 0;
  margin: 0 12px 0 7px;
  border-style: solid;
  border-width: 5px 0 5px 5px;
  border-color: transparent transparent transparent #555;
}

.twisty.none {
  border-color: transparent;
}

.ic-tree {
  flex: none;
  width: 22px;
  height: 22px;
  margin-right: 6px;
}

.panel-split {
  position: relative;
  height: 0;
}

.panel-split i {
  position: absolute;
  left: 214px;
  top: 2px;
  width: 20px;
  height: 1px;
  background-image: repeating-linear-gradient(to right, #b8b8b8 0 1px, transparent 1px 4px);
}

.layer-list {
  flex: 1;
  background-color: #fff;
}

.splitter {
  flex: none;
  width: 8px;
  background-color: #f0f0f0;
}

.canvas {
  flex: 1;
  background-color: #fff;
  border-left: 1px solid #a6a6a6;
}

/* plugin dialog, a window floating over the main one */
.dialog {
  position: absolute;
  left: 356px;
  top: 110px;
  display: flex;
  flex-direction: column;
  width: 1009px;
  height: 586px;
  overflow: hidden;
  background-color: #efefef;
  border: 1px solid #a3a3a3;
  border-radius: 8px 8px 6px 6px;
  box-shadow: 0 14px 40px rgba(0, 0, 0, 0.38), 0 30px 30px rgba(0, 0, 0, 0.1);
}

.dialog-head {
  display: flex;
  align-items: center;
  flex: none;
  height: 37px;
  padding: 0 14px 0 9px;
  background-color: #f4f4f4;
}

.dialog-logo {
  width: 20px;
  height: 20px;
  margin-right: 4px;
}

.dialog-title {
  flex: 1;
  font-size: 14px;
  color: #1a1a1a;
}

.dialog-close {
  width: 12px;
  height: 12px;
}

.dialog-body {
  display: flex;
  flex: 1;
  min-height: 0;
}

.nav {
  flex: none;
  width: 118px;
  background-color: #5a5a5a;
  color: #f2f2f2;
  font-size: 14px;
  line-height: 20px;
}

.nav-item {
  display: flex;
  align-items: center;
  gap: 6px;
  padding-left: 3px;
}

.ic-nav {
  flex: none;
  width: 36px;
  height: 36px;
}

.h-all {
  height: 46px;
}

.h-ins {
  height: 44px;
}

.h-not {
  height: 49px;
}

.nav-current {
  height: 52px;
  padding-left: 7px;
  color: #1c1c1c;
  background-color: #efefef;
}

.h-set {
  height: 42px;
  margin-top: 21px;
}

.content {
  position: relative;
  display: flex;
  flex-direction: column;
  flex: 1;
  min-width: 0;
}

.vgrip {
  position: absolute;
  left: 5px;
  top: 265px;
  width: 1px;
  height: 18px;
  background-image: repeating-linear-gradient(#b0b0b0 0 1px, transparent 1px 3px);
}

.pane {
  display: flex;
  flex-direction: column;
  padding: 53px 28px 0 33px;
}

.pane p {
  margin: 0 0 16px;
  font-size: 12px;
  line-height: 16px;
  letter-spacing: 0.025px;
  color: #1c1c1c;
}

.pane p + p {
  letter-spacing: -0.05px;
}

.zip-row {
  display: flex;
  align-items: center;
  gap: 7px;
  height: 27px;
  margin-top: 41px;
  font-size: 12px;
}

.zip-label {
  flex: none;
  width: 40px;
}

.zip-input {
  flex: 1;
  height: 27px;
  background-color: #fff;
  border: 1px solid #a8a8a8;
  border-radius: 3px;
}

.btn {
  font-family: inherit;
  font-size: 12px;
  color: #1c1c1c;
  background: linear-gradient(#fdfdfd, #efefef);
  border: 1px solid #adadad;
  border-radius: 3px;
  padding: 0;
}

.btn-dots {
  flex: none;
  width: 29px;
  height: 25px;
  margin-left: 2px;
}

.btn-install {
  align-self: center;
  width: 250px;
  height: 26px;
  margin-top: 38px;
  color: #7a7a7a;
  border-color: #c6c6c6;
}

.footer {
  display: flex;
  justify-content: flex-end;
  gap: 7px;
  margin-top: auto;
  padding: 0 3px 3px 0;
}

.btn-foot {
  width: 100px;
  height: 26px;
}

/* annotations */
.mark {
  position: absolute;
  border: 6px solid #ff2340;
}

.mark-1 {
  left: 351px;
  top: 284px;
  width: 136px;
  height: 58px;
}

.mark-2 {
  left: 1299px;
  top: 299px;
  width: 46px;
  height: 43px;
}

.mark-3 {
  left: 789px;
  top: 361px;
  width: 269px;
  height: 48px;
}

.num {
  position: absolute;
  font-size: 18px;
  line-height: 20px;
  color: #ff2340;
}

.num-1 {
  left: 490px;
  top: 353px;
}

.num-2 {
  left: 1280px;
  top: 345px;
}

.num-3 {
  left: 920px;
  top: 421px;
}
```
